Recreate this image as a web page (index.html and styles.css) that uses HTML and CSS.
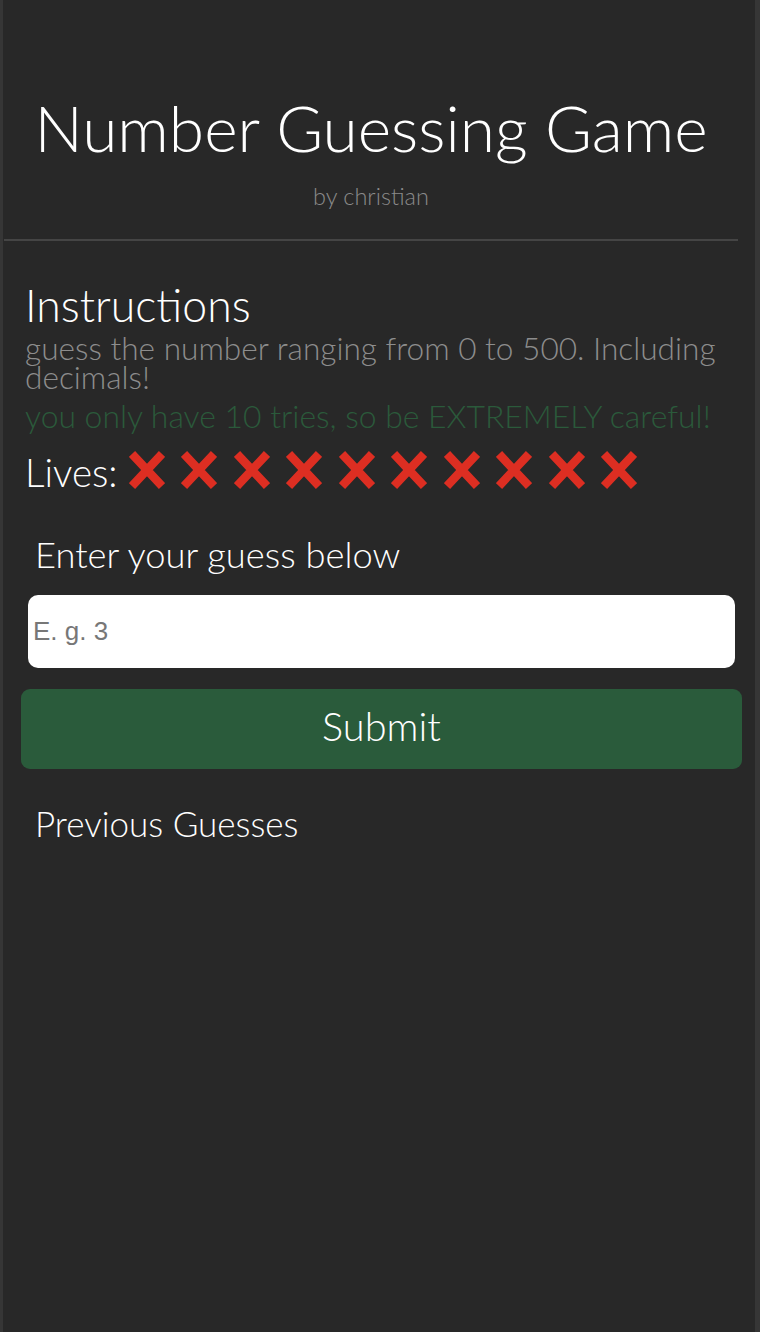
FILE: index.html
```html
<!DOCTYPE html>
<html lang="en">
<head>
<meta charset="utf-8">
<title>Number Guessing Game</title>
<link rel="stylesheet" href="styles.css">
</head>
<body>
<div class="app">
  <header class="header">
    <h1 class="title">Number Guessing Game</h1>
    <p class="byline">by christian</p>
  </header>
  <hr class="divider">
  <section class="instructions">
    <h2 class="section-title">Instructions</h2>
    <p class="desc">guess the number ranging from 0 to 500. Including decimals!</p>
    <p class="warning">you only have 10 tries, so be EXTREMELY careful!</p>
    <div class="lives">
      <span class="lives-label">Lives:</span>
      <div class="marks">
        <svg class="mark" viewBox="0 0 36 38"><path d="M3 3 L33 35 M33 3 L3 35"/></svg>
        <svg class="mark" viewBox="0 0 36 38"><path d="M3 3 L33 35 M33 3 L3 35"/></svg>
        <svg class="mark" viewBox="0 0 36 38"><path d="M3 3 L33 35 M33 3 L3 35"/></svg>
        <svg class="mark" viewBox="0 0 36 38"><path d="M3 3 L33 35 M33 3 L3 35"/></svg>
        <svg class="mark" viewBox="0 0 36 38"><path d="M3 3 L33 35 M33 3 L3 35"/></svg>
        <svg class="mark" viewBox="0 0 36 38"><path d="M3 3 L33 35 M33 3 L3 35"/></svg>
        <svg class="mark" viewBox="0 0 36 38"><path d="M3 3 L33 35 M33 3 L3 35"/></svg>
        <svg class="mark" viewBox="0 0 36 38"><path d="M3 3 L33 35 M33 3 L3 35"/></svg>
        <svg class="mark" viewBox="0 0 36 38"><path d="M3 3 L33 35 M33 3 L3 35"/></svg>
        <svg class="mark" viewBox="0 0 36 38"><path d="M3 3 L33 35 M33 3 L3 35"/></svg>
      </div>
    </div>
  </section>
  <section class="guess">
    <label class="guess-label" for="guess">Enter your guess below</label>
    <input class="guess-input" id="guess" type="text" placeholder="E. g. 3">
    <button class="submit" type="button">Submit</button>
    <h3 class="prev-title">Previous Guesses</h3>
  </section>
</div>
</body>
</html>
```
FILE: styles.css
```css
html, body {
  margin: 0;
  padding: 0;
}
body {
  background: #363636;
  font-family: "Lato", "Noto Sans", sans-serif;
  font-weight: 300;
  color: #ffffff;
}
.app {
  margin: 0 5px 0 3px;
  min-height: 1332px;
  background: #282828;
  display: flex;
  flex-direction: column;
}
.header {
  display: flex;
  flex-direction: column;
  align-items: center;
}
.title {
  margin: 90px 0 0 0;
  font-size: 64px;
  line-height: 1.2;
  font-weight: 300;
  padding-right: 16px;
}
.byline {
  margin: 15px 0 0 0;
  font-size: 23.5px;
  line-height: 1.2;
  color: #8a8a8a;
  padding-right: 16px;
}
.divider {
  margin: 29px 17px 0 1px;
  border: 0;
  height: 2px;
  background: #454545;
}
.instructions {
  padding-left: 22px;
  display: flex;
  flex-direction: column;
}
.section-title {
  margin: 37px 0 0 0;
  font-size: 44.6px;
  line-height: 1.2;
  font-weight: 300;
}
.desc {
  margin: 3px 0 0 0;
  font-size: 31.6px;
  line-height: 29px;
  color: #8d8d8d;
}
.warning {
  margin: 10px 0 0 0;
  font-size: 31.9px;
  line-height: 29px;
  color: #2b5a3b;
}
.lives {
  margin-top: 18px;
  display: flex;
  align-items: center;
  gap: 11px;
}
.lives-label {
  font-size: 38.5px;
  line-height: 1.2;
}
.marks {
  display: flex;
  gap: 16.5px;
  margin-top: -5px;
}
.mark {
  width: 36px;
  height: 38px;
  display: block;
}
.mark path {
  stroke: #dd2e22;
  stroke-width: 8.5;
  fill: none;
}
.guess {
  display: flex;
  flex-direction: column;
}
.guess-label {
  margin: 37px 0 0 32px;
  font-size: 36.3px;
  line-height: 1.2;
}
.guess-input {
  margin: 19px 0 0 25px;
  width: 707px;
  height: 73px;
  box-sizing: border-box;
  border: 0;
  border-radius: 10px;
  background: #ffffff;
  padding: 0 0 0 5px;
  font-family: "Liberation Sans", Arial, sans-serif;
  font-size: 26px;
  color: #333;
  outline: none;
}
.guess-input::placeholder {
  color: #777777;
}
.submit {
  margin: 21px 0 0 18px;
  width: 721px;
  height: 80px;
  border: 0;
  border-radius: 9px;
  background: #2a5b3b;
  color: #ffffff;
  font-family: "Lato", "Noto Sans", sans-serif;
  font-weight: 300;
  font-size: 39.7px;
  line-height: 1;
  padding: 0 0 6px 0;
}
.prev-title {
  margin: 33px 0 0 32px;
  font-size: 35px;
  line-height: 1.2;
  font-weight: 300;
}
```
